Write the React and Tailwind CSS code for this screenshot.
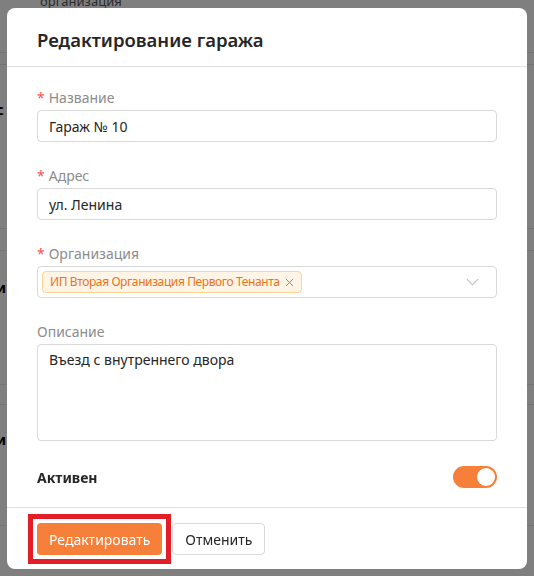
import { useState } from 'react';

const font = { fontFamily: '"Noto Sans", "Open Sans", Arial, sans-serif' };

function Label({ required, children }) {
  return (
    <div className="h-[22px] flex items-center text-[14px] text-[#8c8c8c] mb-[2px]">
      {required && <span className="text-[#ff4d4f] mr-[4px] text-[14px]">*</span>}
      {children}
    </div>
  );
}

// the page behind the modal, mostly hidden by the mask
function Backdrop() {
  return (
    <div className="min-h-screen bg-white text-[13px] text-[#333]">
      <div className="pl-10 -mt-[8px] h-[20px] text-[#555]">организация</div>
      <div className="h-[41px] border-b border-[#e8e8e8]" />
      <div className="h-[12px] border-b border-[#e8e8e8]" />
      <div className="h-[88px] flex items-center -ml-[4px] font-bold text-[15px] text-black">с</div>
      <div className="h-[76px] border-b border-[#e8e8e8]" />
      <div className="h-[22px] border-b border-[#e8e8e8]" />
      <div className="h-[72px] flex items-center -ml-[4px] font-bold text-[15px] text-black">и</div>
      <div className="h-[62px] border-b border-[#e8e8e8]" />
      <div className="h-[20px] border-b border-[#e8e8e8]" />
      <div className="h-[68px] flex items-center -ml-[4px] font-bold text-[15px] text-black">и</div>
      <div className="h-[53px] border-b border-[#e8e8e8]" />
    </div>
  );
}

export default function App() {
  const [active, setActive] = useState(true);

  return (
    <div style={font} className="relative w-[534px] h-[576px] overflow-hidden">
      <Backdrop />
      <div className="fixed inset-0 bg-black/50 flex justify-center items-start pt-[8px]">
        <div className="w-[520px] h-[561px] bg-white rounded-lg flex flex-col">
          <div className="h-[59px] px-[30px] flex items-center border-b border-[#e0e0e0] shrink-0">
            <h1 className="text-[18.5px] font-semibold text-[#262626] pt-[6px]">Редактирование гаража</h1>
          </div>

          <div className="flex-1 px-[30px] pt-[19px]">
            <Label required>Название</Label>
            <input
              defaultValue="Гараж № 10"
              className="w-full h-[32px] border border-[#d9d9d9] rounded-[4px] px-[11px] text-[14px] text-[#262626] outline-none mb-[22px]"
            />

            <Label required>Адрес</Label>
            <input
              defaultValue="ул. Ленина"
              className="w-full h-[32px] border border-[#d9d9d9] rounded-[4px] px-[11px] text-[14px] text-[#262626] outline-none mb-[22px]"
            />

            <Label required>Организация</Label>
            <div className="w-full h-[32px] border border-[#d9d9d9] rounded-[4px] pl-[4px] pr-[17px] flex items-center mb-[22px]">
              <span className="h-[22px] flex items-center gap-[5px] px-[7px] rounded-[4px] bg-[#fff4e5] border border-[#ffd591] text-[12px] tracking-[-0.4px] text-[#e8751a]">
                ИП Вторая Организация Первого Тенанта
                <svg width="9" height="9" viewBox="0 0 10 10" className="text-[#8c8c8c]">
                  <path d="M1 1 L9 9 M9 1 L1 9" stroke="currentColor" strokeWidth="1.1" fill="none" />
                </svg>
              </span>
              <svg width="13" height="8" viewBox="0 0 14 8" className="ml-auto text-[#bfbfbf]">
                <path d="M1 1 L7 7 L13 1" stroke="currentColor" strokeWidth="1.2" fill="none" />
              </svg>
            </div>

            <Label>Описание</Label>
            <textarea
              defaultValue="Въезд с внутреннего двора"
              className="w-full h-[97px] border border-[#d9d9d9] rounded-[4px] px-[11px] py-[4px] text-[14px] text-[#262626] outline-none resize-none block"
            />

            <div className="mt-[25px] flex items-center justify-between">
              <span className="text-[14px] font-bold text-[#262626]">Активен</span>
              <button
                onClick={() => setActive(!active)}
                className={`w-[44px] h-[22px] rounded-full flex items-center px-[2px] ${active ? 'bg-[#f6803a] justify-end' : 'bg-[#bfbfbf] justify-start'}`}
              >
                <span className="w-[18px] h-[18px] rounded-full bg-white" />
              </button>
            </div>
          </div>

          <div className="h-[62px] shrink-0 border-t border-[#e0e0e0] px-[30px] pt-[15px] flex items-start">
            <div className="-mt-[9px] -ml-[9px] mr-[1px] border-[5px] border-[#e41e26] p-[4px]">
              <button className="h-[32px] px-[12px] rounded-[4px] bg-[#f6803a] text-white text-[14px] block">
                Редактировать
              </button>
            </div>
            <button className="h-[32px] px-[12px] rounded-[4px] border border-[#d9d9d9] bg-white text-[#262626] text-[14px]">
              Отменить
            </button>
          </div>
        </div>
      </div>
    </div>
  );
}
